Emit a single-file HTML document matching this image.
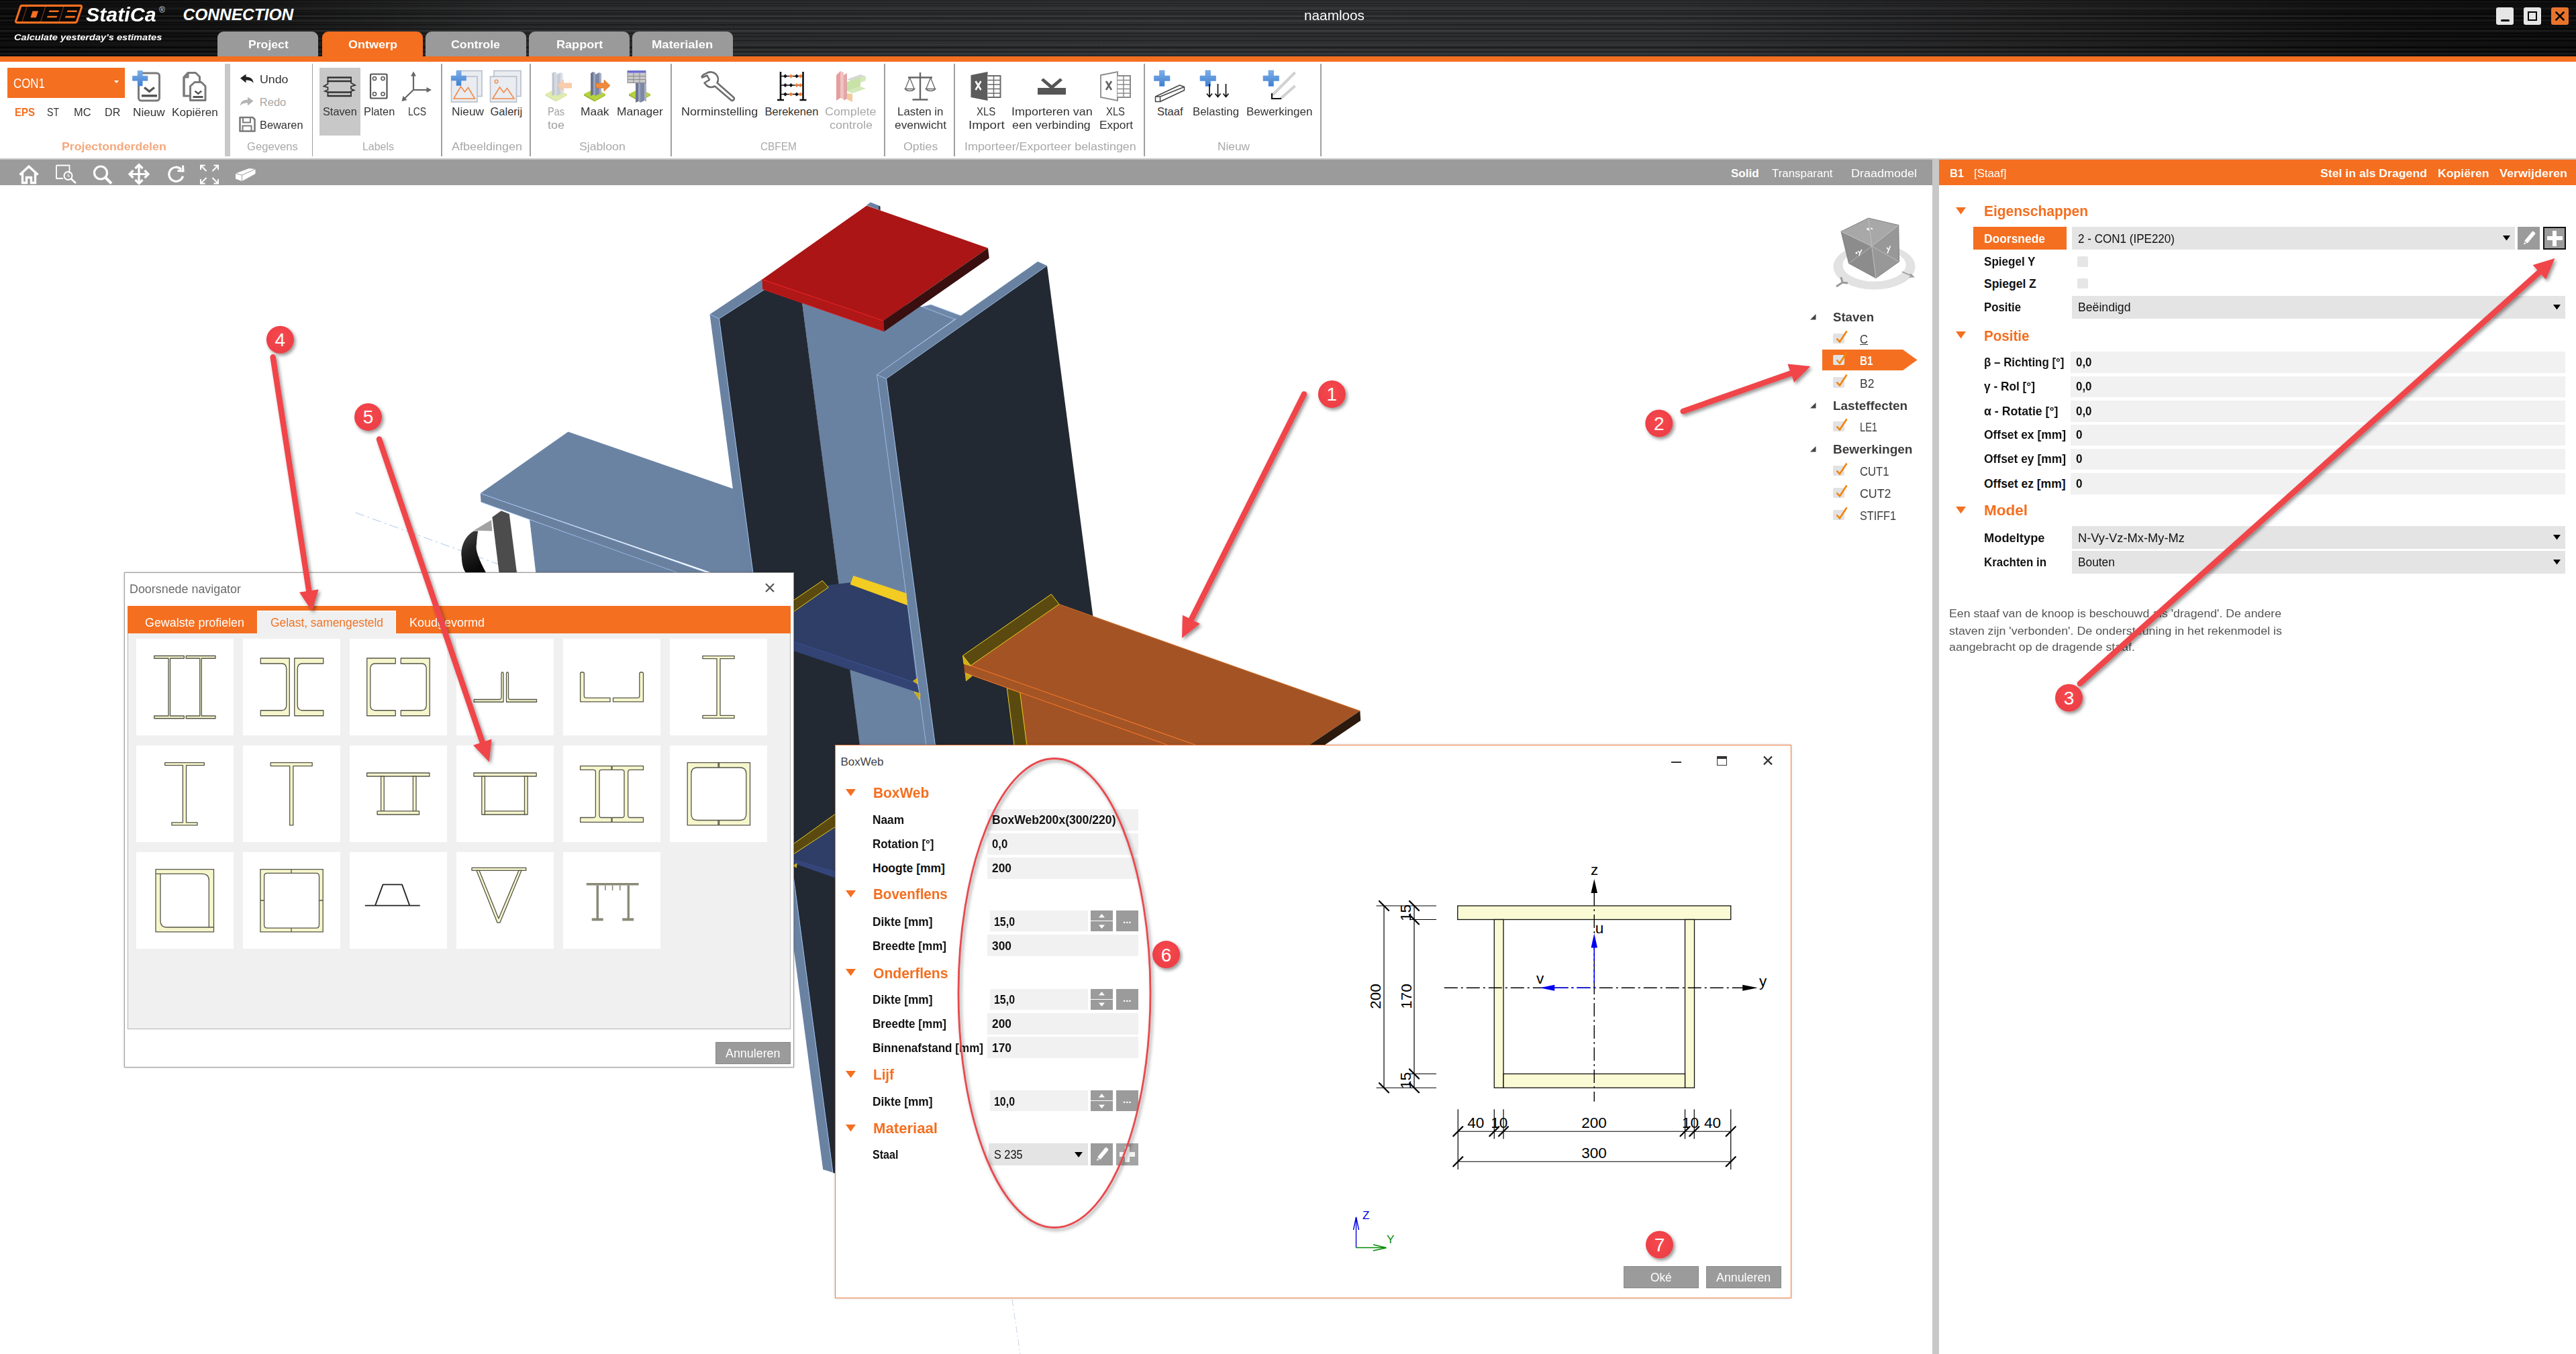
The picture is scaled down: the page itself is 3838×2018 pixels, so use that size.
<!DOCTYPE html>
<html><head><meta charset="utf-8"><title>IDEA StatiCa Connection</title><style>html,body{margin:0;padding:0;background:#fff;}
body{width:3838px;height:2018px;position:relative;overflow:hidden;font-family:"Liberation Sans",sans-serif;}
.t{position:absolute;white-space:nowrap;line-height:1;transform-origin:0 50%;}
.r{position:absolute;display:block;}
svg{overflow:visible}
</style></head><body>
<div class="r" style="left:0;top:0;width:3838px;height:84px;background:repeating-linear-gradient(to bottom,rgba(0,0,0,0) 0px,rgba(0,0,0,0.24) 1.5px,rgba(255,255,255,0.04) 3px,rgba(0,0,0,0) 4.5px,rgba(0,0,0,0.16) 6px,rgba(0,0,0,0) 7px),repeating-linear-gradient(to bottom,rgba(255,255,255,0) 0px,rgba(255,255,255,0.055) 2px,rgba(0,0,0,0.14) 5px,rgba(255,255,255,0.03) 8px,rgba(255,255,255,0) 11px),repeating-linear-gradient(to bottom,rgba(0,0,0,0) 0px,rgba(0,0,0,0.2) 3px,rgba(255,255,255,0.04) 6.5px,rgba(0,0,0,0.12) 9px,rgba(255,255,255,0.05) 13px,rgba(0,0,0,0) 17px),linear-gradient(to right,#030303 0%,#0a0a0a 8%,#232425 20%,#2b2c2e 45%,#292a2c 65%,#161617 82%,#080808 92%,#030303 100%);"></div>
<div class="r" style="left:0.0px;top:84.0px;width:3838.0px;height:8.0px;background:#f46f20;"></div>
<div class="r" style="left:324.0px;top:47.0px;width:150.0px;height:37.0px;background:#9a9a9a;border-radius:9px 9px 0 0;"></div>
<span class="t" style="left:369.5px;top:58.0px;font-size:16.5px;color:#fff;font-weight:bold;transform:scaleX(1.0681);">Project</span>
<div class="r" style="left:480.0px;top:47.0px;width:150.0px;height:38.0px;background:#f46f20;border-radius:9px 9px 0 0;"></div>
<span class="t" style="left:518.8px;top:58.0px;font-size:16.5px;color:#fff;font-weight:bold;transform:scaleX(1.0909);">Ontwerp</span>
<div class="r" style="left:634.0px;top:47.0px;width:150.0px;height:37.0px;background:#9a9a9a;border-radius:9px 9px 0 0;"></div>
<span class="t" style="left:672.0px;top:58.0px;font-size:16.5px;color:#fff;font-weight:bold;transform:scaleX(1.0762);">Controle</span>
<div class="r" style="left:788.0px;top:47.0px;width:150.0px;height:37.0px;background:#9a9a9a;border-radius:9px 9px 0 0;"></div>
<span class="t" style="left:828.8px;top:58.0px;font-size:16.5px;color:#fff;font-weight:bold;transform:scaleX(1.0949);">Rapport</span>
<div class="r" style="left:942.0px;top:47.0px;width:150.0px;height:37.0px;background:#9a9a9a;border-radius:9px 9px 0 0;"></div>
<span class="t" style="left:971.2px;top:58.0px;font-size:16.5px;color:#fff;font-weight:bold;transform:scaleX(1.1180);">Materialen</span>
<span class="t" style="left:1943.0px;top:12.0px;font-size:21px;color:#fff;transform:scaleX(0.9884);">naamloos</span>
<div class="r" style="left:3719.0px;top:11.0px;width:26.0px;height:26.0px;background:#e6e6e6;border-radius:3px;"></div>
<div class="r" style="left:3760.0px;top:11.0px;width:26.0px;height:26.0px;background:#e6e6e6;border-radius:3px;"></div>
<div class="r" style="left:3801.0px;top:11.0px;width:26.0px;height:26.0px;background:#e8742c;border-radius:3px;"></div>
<div class="r" style="left:3725.5px;top:28.5px;width:13.0px;height:3.0px;background:#000;border-radius:1.5px;"></div>
<div class="r" style="left:3766px;top:17px;width:14px;height:14px;box-sizing:border-box;border:2px solid #000;"></div>
<svg class="r" style="left:3801px;top:11px" width="26" height="26"><path d="M7.5 7.5L18.5 18.5M18.5 7.5L7.5 18.5" stroke="#000" stroke-width="2.6" stroke-linecap="round"/></svg>
<svg class="r" style="left:0;top:0" width="130" height="40" viewBox="0 0 130 40"><path d="M32.5 8.4H119.5Q122.3 8.4 121.4 11.2L114.6 31.6Q113.8 33.6 111.5 33.6H25.5Q22.8 33.6 23.7 31L30.4 10.5Q31 8.4 32.5 8.4Z" fill="#070707" stroke="#f46f20" stroke-width="3.1"/><g fill="#f46f20"><path d="M48.6 16.5H57L53.8 26.2H45.4Z"/><path d="M73.5 15.6H88L87.2 18H72.7Z M70.8 23.8H85.3L84.5 26.2H70Z"/><path d="M100.5 15.6H115L114.2 18H99.7Z M97.8 23.8H112.3L111.4 26.6H96.9Z"/><path d="M40.6 10L39.6 10L32.6 32L33.6 32Z M68.2 10L67.2 10L60.2 32L61.2 32Z M95.4 10L94.4 10L87.4 32L88.4 32Z" opacity="0.55"/></g></svg>
<span class="t" style="left:128.0px;top:8.0px;font-size:29px;color:#fff;font-weight:bold;font-style:italic;transform:scaleX(1.0459);">StatiCa</span>
<span class="t" style="left:237.0px;top:9.0px;font-size:12px;color:#ddd;">®</span>
<span class="t" style="left:272.5px;top:10.0px;font-size:24.5px;color:#fff;font-weight:bold;font-style:italic;">CONNECTION</span>
<span class="t" style="left:21.2px;top:49.0px;font-size:13.5px;color:#fff;font-weight:bold;font-style:italic;transform:scaleX(1.0821);">Calculate yesterday's estimates</span>
<div class="r" style="left:0.0px;top:92.0px;width:3838.0px;height:144.0px;background:#fff;"></div>
<div class="r" style="left:0.0px;top:236.0px;width:3838.0px;height:2.0px;background:#c6c6c6;"></div>
<div class="r" style="left:335.0px;top:95.0px;width:7.5px;height:138.0px;background:#c8c8c8;"></div>
<div class="r" style="left:464.8px;top:95.0px;width:1.6px;height:138.0px;background:#a0a0a0;"></div>
<div class="r" style="left:657.2px;top:95.0px;width:1.6px;height:138.0px;background:#a0a0a0;"></div>
<div class="r" style="left:789.2px;top:95.0px;width:1.6px;height:138.0px;background:#a0a0a0;"></div>
<div class="r" style="left:999.2px;top:95.0px;width:1.6px;height:138.0px;background:#a0a0a0;"></div>
<div class="r" style="left:1317.2px;top:95.0px;width:1.6px;height:138.0px;background:#a0a0a0;"></div>
<div class="r" style="left:1421.2px;top:95.0px;width:1.6px;height:138.0px;background:#a0a0a0;"></div>
<div class="r" style="left:1704.2px;top:95.0px;width:1.6px;height:138.0px;background:#a0a0a0;"></div>
<div class="r" style="left:1967.2px;top:95.0px;width:1.6px;height:138.0px;background:#a0a0a0;"></div>
<div class="r" style="left:11.0px;top:101.0px;width:175.0px;height:44.5px;background:#f46f20;"></div>
<span class="t" style="left:20.0px;top:115.0px;font-size:19.5px;color:#fff;transform:scaleX(0.8675);">CON1</span>
<svg class="r" style="left:170px;top:120px" width="8" height="5"><path d="M0 0h7l-3.5 4z" fill="#fff"/></svg>
<span class="t" style="left:21.8px;top:159.0px;font-size:16.5px;color:#f46f20;font-weight:bold;transform:scaleX(0.9086);">EPS</span>
<span class="t" style="left:69.5px;top:159.0px;font-size:16.5px;color:#333;transform:scaleX(0.8537);">ST</span>
<span class="t" style="left:110.0px;top:159.0px;font-size:16.5px;color:#333;transform:scaleX(0.9937);">MC</span>
<span class="t" style="left:155.5px;top:159.0px;font-size:16.5px;color:#333;transform:scaleX(0.9756);">DR</span>
<span class="t" style="left:198.0px;top:159.0px;font-size:16.5px;color:#333;transform:scaleX(1.0414);">Nieuw</span>
<span class="t" style="left:255.8px;top:159.0px;font-size:16.5px;color:#333;transform:scaleX(1.0409);">Kopiëren</span>
<div class="r" style="left:476.0px;top:101.0px;width:61.0px;height:101.0px;background:#c8c8c8;"></div>
<span class="t" style="left:480.5px;top:158.0px;font-size:16.5px;color:#333;transform:scaleX(0.9879);">Staven</span>
<span class="t" style="left:542.0px;top:158.0px;font-size:16.5px;color:#333;transform:scaleX(0.9885);">Platen</span>
<span class="t" style="left:608.0px;top:158.0px;font-size:16.5px;color:#333;transform:scaleX(0.8411);">LCS</span>
<span class="t" style="left:672.5px;top:158.0px;font-size:16.5px;color:#333;transform:scaleX(1.0468);">Nieuw</span>
<span class="t" style="left:730.5px;top:158.0px;font-size:16.5px;color:#333;">Galerij</span>
<span class="t" style="left:815.5px;top:158.0px;font-size:16.5px;color:#a0a0a0;transform:scaleX(0.8793);">Pas</span>
<span class="t" style="left:864.5px;top:158.0px;font-size:16.5px;color:#333;transform:scaleX(1.0533);">Maak</span>
<span class="t" style="left:918.8px;top:158.0px;font-size:16.5px;color:#333;transform:scaleX(1.0557);">Manager</span>
<span class="t" style="left:1014.5px;top:158.0px;font-size:16.5px;color:#333;transform:scaleX(1.0929);">Norminstelling</span>
<span class="t" style="left:1139.5px;top:158.0px;font-size:16.5px;color:#333;">Berekenen</span>
<span class="t" style="left:1229.2px;top:158.0px;font-size:16.5px;color:#a8a8a8;transform:scaleX(1.0833);">Complete</span>
<span class="t" style="left:1337.0px;top:158.0px;font-size:16.5px;color:#333;transform:scaleX(1.0229);">Lasten in</span>
<span class="t" style="left:1455.0px;top:158.0px;font-size:16.5px;color:#333;transform:scaleX(0.9058);">XLS</span>
<span class="t" style="left:1506.8px;top:158.0px;font-size:16.5px;color:#333;transform:scaleX(1.0881);">Importeren van</span>
<span class="t" style="left:1648.2px;top:158.0px;font-size:16.5px;color:#333;transform:scaleX(0.8978);">XLS</span>
<span class="t" style="left:1724.0px;top:158.0px;font-size:16.5px;color:#333;">Staaf</span>
<span class="t" style="left:1777.0px;top:158.0px;font-size:16.5px;color:#333;transform:scaleX(1.0165);">Belasting</span>
<span class="t" style="left:1857.0px;top:158.0px;font-size:16.5px;color:#333;transform:scaleX(1.0326);">Bewerkingen</span>
<span class="t" style="left:815.5px;top:178.0px;font-size:16.5px;color:#a0a0a0;transform:scaleX(1.0899);">toe</span>
<span class="t" style="left:1235.5px;top:178.0px;font-size:16.5px;color:#a8a8a8;transform:scaleX(1.0902);">controle</span>
<span class="t" style="left:1332.5px;top:178.0px;font-size:16.5px;color:#333;transform:scaleX(1.0494);">evenwicht</span>
<span class="t" style="left:1442.5px;top:178.0px;font-size:16.5px;color:#333;transform:scaleX(1.1494);">Import</span>
<span class="t" style="left:1508.2px;top:178.0px;font-size:16.5px;color:#333;transform:scaleX(1.0785);">een verbinding</span>
<span class="t" style="left:1637.5px;top:178.0px;font-size:16.5px;color:#333;transform:scaleX(1.0485);">Export</span>
<span class="t" style="left:386.8px;top:110.0px;font-size:16.5px;color:#333;transform:scaleX(1.0774);">Undo</span>
<span class="t" style="left:386.8px;top:144.0px;font-size:16.5px;color:#a8a8a8;">Redo</span>
<span class="t" style="left:386.8px;top:178.0px;font-size:16.5px;color:#333;transform:scaleX(0.9904);">Bewaren</span>
<span class="t" style="left:91.8px;top:210.0px;font-size:16.5px;color:#f5a87c;font-weight:bold;transform:scaleX(1.0751);">Projectonderdelen</span>
<span class="t" style="left:367.5px;top:210.0px;font-size:16.5px;color:#a9a9a9;transform:scaleX(1.0071);">Gegevens</span>
<span class="t" style="left:540.0px;top:210.0px;font-size:16.5px;color:#a9a9a9;transform:scaleX(0.9666);">Labels</span>
<span class="t" style="left:672.5px;top:210.0px;font-size:16.5px;color:#a9a9a9;transform:scaleX(1.0899);">Afbeeldingen</span>
<span class="t" style="left:862.5px;top:210.0px;font-size:16.5px;color:#a9a9a9;transform:scaleX(1.0705);">Sjabloon</span>
<span class="t" style="left:1133.2px;top:210.0px;font-size:16.5px;color:#a9a9a9;transform:scaleX(0.9307);">CBFEM</span>
<span class="t" style="left:1346.2px;top:210.0px;font-size:16.5px;color:#a9a9a9;transform:scaleX(1.0747);">Opties</span>
<span class="t" style="left:1436.8px;top:210.0px;font-size:16.5px;color:#a9a9a9;transform:scaleX(1.0850);">Importeer/Exporteer belastingen</span>
<span class="t" style="left:1813.5px;top:210.0px;font-size:16.5px;color:#a9a9a9;transform:scaleX(1.0468);">Nieuw</span>
<div class="r" style="left:0.0px;top:238.0px;width:2879.0px;height:37.5px;background:#9b9b9b;"></div>
<div class="r" style="left:2879.0px;top:236.0px;width:9.5px;height:1782.0px;background:#c8c8c8;"></div>
<span class="t" style="left:2579.0px;top:250.0px;font-size:17px;color:#fff;font-weight:bold;">Solid</span>
<span class="t" style="left:2639.5px;top:250.0px;font-size:17px;color:#fff;transform:scaleX(0.9942);">Transparant</span>
<span class="t" style="left:2757.5px;top:250.0px;font-size:17px;color:#fff;transform:scaleX(1.0582);">Draadmodel</span>
<svg class="r" style="left:0;top:237px" width="400" height="39" viewBox="0 237 400 39"><g fill="none" stroke="#fff" stroke-width="3" stroke-linejoin="miter">
<path d="M29.5 260.5L43 248l13.5 12.5M33.5 258v14.5h6v-8h7v8h6V258" stroke-width="3.400"/>
<path d="M84 246.5h19.5v12M84 246.5v19.5h10" stroke-width="1.8"/><circle cx="101.5" cy="262" r="6" stroke-width="2"/><path d="M106 266.5l7 6.5" stroke-width="2.6"/><path d="M101.5 259.5v3h2.5" stroke-width="1.2"/>
<circle cx="150" cy="257.5" r="9.5" stroke-width="3.2"/><path d="M157 264.5l9 9" stroke-width="4"/>
<path d="M207 248v23M195.5 259.5h23" stroke-width="3.2"/><path d="M201.5 251l5.5-5.5 5.5 5.5M201.5 268l5.5 5.5 5.5-5.5M198.5 254l-5.5 5.5 5.5 5.5M215.5 254l5.5 5.5-5.5 5.5" stroke-width="3.2"/>
<path d="M270 252.5a10.5 10.5 0 1 0 2.5 10" stroke-width="3.2"/><path d="M264.5 254.5l8.5 .5-.5-8.5" stroke-width="3"/>
<path d="M299 253v-6.5h6.5M299.5 247l8 8M325 253v-6.5h-6.5M324.5 247l-8 8M299 267v6.5h6.5M299.5 273l8-8M325 267v6.5h-6.5M324.5 273l-8-8" stroke-width="2"/>
</g><path d="M351 258.5l20-7.5 9.5 1v7l-20 11-9.5-3.5z" fill="#fff"/><path d="M351 258.5l9.5 2.5v9M360.5 261l20-9" fill="none" stroke="#9b9b9b" stroke-width="1"/></svg>
<svg class="r" style="left:0;top:92px" width="2000" height="144" viewBox="0 92 2000 144">
<defs><linearGradient id="bp" x1="0" y1="0" x2="0" y2="1"><stop offset="0" stop-color="#7fb0e8"/><stop offset="1" stop-color="#3f7fd0"/></linearGradient></defs>
<rect x="206.5" y="109" width="31" height="41" rx="4" fill="#fff" stroke="#7a7a7a" stroke-width="3"/>
<path d="M211 141h23v3.5h-23z M214 131.5l2.2-2.2 6.3 5 6.3-5 2.2 2.2-8.5 7z" fill="#555"/>
<path d="M205.25 105.5h7v7.75h7.75v7h-7.75v7.75h-7v-7.75h-7.75v-7h7.75z" fill="url(#bp)" stroke="#5a94dc" stroke-width="0.6"/>
<path d="M280 108.5h11.5l6 6v28.5h-6" fill="none" stroke="#7a7a7a" stroke-width="3" stroke-linejoin="round"/><path d="M274 143v-28l6-6.5v6.5h-6" fill="none" stroke="#7a7a7a" stroke-width="3" stroke-linejoin="round"/><path d="M274 115v28h9" fill="none" stroke="#7a7a7a" stroke-width="3"/>
<path d="M290 122.5h10l6 6v21h-22.5v-21z" fill="#fff" stroke="#7a7a7a" stroke-width="3" stroke-linejoin="round"/>
<path d="M287.5 143h15v3h-15z M289.5 136.5l1.8-1.8 4 3.3 4-3.3 1.8 1.8-5.8 4.8z" fill="#555"/>
<path d="M358 116.5l8.5-6v4c7 0 11 3.5 11 9.5c-2-3.5-5.500-4.5-11-4.5v4z" fill="#222"/>
<path d="M377.5 150.5l-8.5-6v4c-7 0-11 3.5-11 9.5c2-3.5 5.5-4.5 11-4.5v4z" fill="#b4b4b4"/>
<path d="M357.5 175h19l3 3v17.5h-22z" fill="#fff" stroke="#7a7a7a" stroke-width="2.6" stroke-linejoin="round"/><path d="M362 175v7.5h11v-7.5 M361.5 195.5v-8h13v8" fill="none" stroke="#7a7a7a" stroke-width="2"/>
<g stroke="#333" fill="none" stroke-width="2.4"><path d="M487.5 115.5h36.5M487.5 121h36.5M487.5 137.5h36.5M487.5 143h36.5"/><path d="M488.5 115.5v9.5l-6 3.5 6 2v3.5l-4.5 2 4.5 1.5v5.5" stroke-width="1.8"/><path d="M523 115.5v8l6 3.5-6 2v3.5l4.5 2-4.5 1.5v7" stroke-width="1.8"/></g>
<rect x="552" y="110.5" width="24.5" height="36" rx="1.5" fill="none" stroke="#555" stroke-width="2.2"/>
<circle cx="558" cy="117" r="2.6" fill="none" stroke="#555" stroke-width="1.5"/>
<circle cx="570.5" cy="117" r="2.6" fill="none" stroke="#555" stroke-width="1.5"/>
<circle cx="558" cy="140" r="2.6" fill="none" stroke="#555" stroke-width="1.5"/>
<circle cx="570.5" cy="140" r="2.6" fill="none" stroke="#555" stroke-width="1.5"/>
<g stroke="#666" stroke-width="2.2" fill="#666"><path d="M616 134V112" fill="none"/><path d="M616 106.5l4 7h-8z" stroke="none"/><path d="M616 134H636" fill="none"/><path d="M643 134l-7.5 4v-8z" stroke="none"/><path d="M616 134L603 146.5" fill="none"/><path d="M598.5 151l2-8 6 6z" stroke="none"/></g>
<rect x="682.5" y="105.5" width="35.5" height="38" fill="#e9ecf1" stroke="#b7bfca" stroke-width="1.6"/>
<rect x="672.5" y="114" width="38.5" height="38" fill="#e9ecf1" stroke="#b7bfca" stroke-width="1.6"/>
<path d="M676 147l10.5-18 6 8 5-6.5 10 16.5z" fill="none" stroke="#f28a4a" stroke-width="1.6"/>
<path d="M680.0 105.5h7v7.5h7.5v7h-7.5v7.5h-7v-7.5h-7.5v-7h7.5z" fill="url(#bp)" stroke="#5a94dc" stroke-width="0.6"/>
<rect x="736" y="105.5" width="40" height="38" fill="#e9ecf1" stroke="#b7bfca" stroke-width="1.6"/>
<rect x="730.5" y="114" width="39" height="38" fill="#e9ecf1" stroke="#b7bfca" stroke-width="1.6"/>
<path d="M734 147l10.5-17 6 8 5-6.5 10.5 15.5z" fill="none" stroke="#f28a4a" stroke-width="1.6"/><circle cx="739.5" cy="121.5" r="2.4" fill="none" stroke="#f28a4a" stroke-width="1.4"/>
<g opacity="0.42"><path d="M812.5 140l16-8 16 8-16 9z" fill="#b5d33a"/><path d="M812.5 140l16 9v2.5l-16-9z" fill="#9ab82c"/><path d="M844.5 140l-16 9v2.5l16-9z" fill="#a6c430"/><path d="M822.5 109l4-2v34l-4 2z" fill="#6c7690"/><path d="M826.5 107l3 1.5v34l-3-1.5z" fill="#9aa4bc"/><path d="M829.5 111l6-3v32l-6 3z" fill="#7d88a4"/><path d="M835.5 108l3 1.5v32l-3-1.5z" fill="#a8b0c6"/><path d="M851.5 124h-12v-5l-9 8.5 9 8.5v-5h12z" fill="#f08a3c" stroke="#e07020" stroke-width="0.8"/></g>
<g opacity="1"><path d="M870 140l16-8 16 8-16 9z" fill="#b5d33a"/><path d="M870 140l16 9v2.5l-16-9z" fill="#9ab82c"/><path d="M902 140l-16 9v2.5l16-9z" fill="#a6c430"/><path d="M880 109l4-2v34l-4 2z" fill="#6c7690"/><path d="M884 107l3 1.5v34l-3-1.5z" fill="#9aa4bc"/><path d="M887 111l6-3v32l-6 3z" fill="#7d88a4"/><path d="M893 108l3 1.5v32l-3-1.5z" fill="#a8b0c6"/><path d="M888 124h12v-5l9 8.5-9 8.5v-5h-12z" fill="#f08a3c" stroke="#e07020" stroke-width="0.8"/></g>
<g opacity="1"><path d="M937 140l16-8 16 8-16 9z" fill="#b5d33a"/><path d="M937 140l16 9v2.5l-16-9z" fill="#9ab82c"/><path d="M969 140l-16 9v2.5l16-9z" fill="#a6c430"/><path d="M947 119l4-2v34l-4 2z" fill="#6c7690"/><path d="M951 117l3 1.5v34l-3-1.5z" fill="#9aa4bc"/><path d="M954 121l6-3v32l-6 3z" fill="#7d88a4"/><path d="M960 118l3 1.5v32l-3-1.5z" fill="#a8b0c6"/><rect x="935" y="105.5" width="27" height="18" fill="#c9c9c9" stroke="#8a8a8a" stroke-width="1"/><rect x="935" y="105.5" width="27" height="3" fill="#6a6adc"/><path d="M935 113.5h27M935 118.5h27M944 108.5v15M953 108.5v15" stroke="#8a8a8a" stroke-width="1" fill="none"/></g>
<path d="M1052 109.5c5-3.5 12-2.5 15.5 2 3 4 3 8.5 1 12l24.5 21.5c2 2 0 6-3.5 4.5l-24.5-21c-4 2-9 2-12.5-1.5l-3-3.5 7.5-4.5-3.5-6.5-7.5 3c-.5-2 1.5-4.5 6-6z" fill="none" stroke="#6e6e6e" stroke-width="2.6" stroke-linejoin="round" transform="translate(0 0)"/>
<g stroke="#111" stroke-width="2.6" fill="none"><path d="M1163 107v42M1196.5 107v42M1158 149h10M1191.5 149h10"/><path d="M1163 113.5h33.5M1163 127h33.5M1163 140.5h33.5" stroke-width="1.4"/></g>
<path d="M1170 110.5l3 3-3 3-3-3z" fill="#111"/>
<path d="M1178.5 110.5l3 3-3 3-3-3z" fill="#f07a30"/>
<path d="M1187 110.5l3 3-3 3-3-3z" fill="#111"/>
<path d="M1192.5 110.5l3 3-3 3-3-3z" fill="#f07a30"/>
<path d="M1170 124l3 3-3 3-3-3z" fill="#111"/>
<path d="M1178.5 124l3 3-3 3-3-3z" fill="#111"/>
<path d="M1187 124l3 3-3 3-3-3z" fill="#f07a30"/>
<path d="M1192.5 124l3 3-3 3-3-3z" fill="#f07a30"/>
<path d="M1170 137.5l3 3-3 3-3-3z" fill="#111"/>
<path d="M1178.5 137.5l3 3-3 3-3-3z" fill="#f07a30"/>
<path d="M1187 137.5l3 3-3 3-3-3z" fill="#111"/>
<path d="M1192.5 137.5l3 3-3 3-3-3z" fill="#f07a30"/>
<g opacity="0.55"><path d="M1246 112l6-6v40l-6 4z" fill="#d05050"/><path d="M1252 106l5 2v40l-5-2z" fill="#e89090"/><path d="M1257 112l5-3v38l-5 3z" fill="#c86060"/><path d="M1262 118l20-7 8 3-20 8z" fill="#b8b8b8"/><path d="M1262 122l20-7v14l-20 7z" fill="#9ccc60"/><path d="M1282 115l8-1v6l-8 3z M1262 136l20-7 8 3-20 7z" fill="#b0d880"/><path d="M1262 139l8 1v12l-8-4z" fill="#e8a050"/></g>
<g stroke="#666" fill="none" stroke-width="2.4"><path d="M1371 108v40M1359.5 148.5h23M1353 115.5h36"/><path d="M1355.5 116l-6.5 16M1355.5 116l6.5 16M1386.5 116l-6.5 16M1386.5 116l6.5 16" stroke-width="1.3"/><path d="M1348.5 132.5c3 4 11 4 14 0zM1379.5 132.5c3 4 11 4 14 0z" fill="#fff" stroke-width="1.6"/></g>
<path d="M1446.5 112l25-5v43l-25-5z" fill="#5c5c5c"/><path d="M1471.5 113h19v32h-19" fill="#fff" stroke="#6a6a6a" stroke-width="2"/><path d="M1471.5 119.5h19M1471.5 126h19M1471.5 132.5h19M1471.5 139h19M1480.5 113v32" stroke="#6a6a6a" stroke-width="1.5" fill="none"/><path d="M1453.5 121l8 13M1461.5 121l-8 13" stroke="#fff" stroke-width="2.6"/>
<path d="M1546 131h42v10h-42z M1551 119.5l3.5-3 12.5 10.5 12.5-10.5 3.5 3-16 14z" fill="#555"/>
<path d="M1640 112l25-5v43l-25-5z" fill="#fff" stroke="#8a8a8a" stroke-width="1.8"/><path d="M1665 113h19v32h-19" fill="#fff" stroke="#8a8a8a" stroke-width="2"/><path d="M1665 119.5h19M1665 126h19M1665 132.5h19M1665 139h19M1674 113v32" stroke="#8a8a8a" stroke-width="1.5" fill="none"/><path d="M1648 121l8 13M1656 121l-8 13" stroke="#666" stroke-width="2.6"/>
<path d="M1727.5 105h7.5v8.0h8.0v7.5h-8.0v8.0h-7.5v-8.0h-8.0v-7.5h8.0z" fill="url(#bp)" stroke="#5a94dc" stroke-width="0.6"/>
<path d="M1721.5 144l36-17 7 2.5v5l-36 17h-7z M1721.5 144h7l36-14.5M1728.5 144v7.5" fill="#fff" stroke="#444" stroke-width="1.5" stroke-linejoin="round"/>
<path d="M1796.0 105h7.5v8.0h8.0v7.5h-8.0v8.0h-7.5v-8.0h-8.0v-7.5h8.0z" fill="url(#bp)" stroke="#5a94dc" stroke-width="0.6"/>
<path d="M1802 125v19M1798 139.5l4 5 4-5" fill="none" stroke="#111" stroke-width="1.7"/>
<path d="M1814.5 125v19M1810.5 139.5l4 5 4-5" fill="none" stroke="#111" stroke-width="1.7"/>
<path d="M1826.5 125v19M1822.5 139.5l4 5 4-5" fill="none" stroke="#111" stroke-width="1.7"/>
<path d="M1896 141.5L1929.5 108M1908 147L1929.5 128" stroke="#b8b8b8" stroke-width="3.5" fill="none"/><path d="M1896 141.5L1929.5 108M1908 147L1929.5 128" stroke="#e4e4e4" stroke-width="1.5" fill="none"/><path d="M1895 139v8h14" fill="none" stroke="#111" stroke-width="2.2"/>
<path d="M1890.0 105h7.5v8.0h8.0v7.5h-8.0v8.0h-7.5v-8.0h-8.0v-7.5h8.0z" fill="url(#bp)" stroke="#5a94dc" stroke-width="0.6"/>
</svg>
<div class="r" style="left:2888.5px;top:238.0px;width:949.5px;height:37.5px;background:#f46f20;"></div>
<span class="t" style="left:2904.5px;top:250.0px;font-size:17px;color:#fff;font-weight:bold;transform:scaleX(0.9663);">B1</span>
<span class="t" style="left:2941.0px;top:250.0px;font-size:17px;color:#fff;transform:scaleX(0.9870);">[Staaf]</span>
<span class="t" style="left:3457.0px;top:250.0px;font-size:17px;color:#fff;font-weight:bold;transform:scaleX(1.0389);">Stel in als Dragend</span>
<span class="t" style="left:3631.5px;top:250.0px;font-size:17px;color:#fff;font-weight:bold;transform:scaleX(1.0383);">Kopiëren</span>
<span class="t" style="left:3723.5px;top:250.0px;font-size:17px;color:#fff;font-weight:bold;transform:scaleX(1.0583);">Verwijderen</span>
<svg class="r" style="left:2914px;top:309.0px" width="15" height="10.5"><path d="M0 0H15L7.5 10.5z" fill="#f46f20"/></svg>
<span class="t" style="left:2956.0px;top:305.0px;font-size:21.5px;color:#f46f20;font-weight:bold;transform:scaleX(0.9754);">Eigenschappen</span>
<svg class="r" style="left:2914px;top:494.0px" width="15" height="10.5"><path d="M0 0H15L7.5 10.5z" fill="#f46f20"/></svg>
<span class="t" style="left:2956.0px;top:491.0px;font-size:21.5px;color:#f46f20;font-weight:bold;transform:scaleX(0.9575);">Positie</span>
<svg class="r" style="left:2914px;top:754.5px" width="15" height="10.5"><path d="M0 0H15L7.5 10.5z" fill="#f46f20"/></svg>
<span class="t" style="left:2956.0px;top:751.0px;font-size:21.5px;color:#f46f20;font-weight:bold;transform:scaleX(1.0466);">Model</span>
<div class="r" style="left:2940.0px;top:338.0px;width:139.0px;height:34.0px;background:#f46f20;"></div>
<span class="t" style="left:2956.0px;top:348.0px;font-size:17.5px;color:#fff;font-weight:bold;transform:scaleX(0.9955);">Doorsnede</span>
<div class="r" style="left:3087.0px;top:338.0px;width:659.5px;height:34.0px;background:#e4e4e4;"></div>
<span class="t" style="left:3096.0px;top:348.0px;font-size:17.5px;color:#111;transform:scaleX(0.9741);">2 - CON1 (IPE220)</span>
<svg class="r" style="left:3729px;top:351px" width="11" height="8"><path d="M0 0H11L5.5 7.5z" fill="#000"/></svg>
<div class="r" style="left:3751.0px;top:338.0px;width:33.0px;height:34.0px;background:#9b9b9b;"></div>
<svg class="r" style="left:3751px;top:338px" width="33" height="34"><path d="M9 26.5l1.8-6.2L21.5 7.2a1.6 1.6 0 0 1 2.3-.2l2 1.7a1.6 1.6 0 0 1 .2 2.3L15.2 24z" fill="#fff"/><path d="M10 22l3.6 3" stroke="#9b9b9b" stroke-width="1.4"/></svg>
<div class="r" style="left:3789px;top:338px;width:34px;height:34px;box-sizing:border-box;border:2px solid #111;background:#9b9b9b"></div>
<div class="r" style="left:3794.5px;top:352.0px;width:23.0px;height:6.0px;background:#fff;"></div>
<div class="r" style="left:3803.0px;top:343.5px;width:6.0px;height:23.0px;background:#fff;"></div>
<span class="t" style="left:2956.0px;top:382.0px;font-size:17.5px;color:#111;font-weight:bold;transform:scaleX(0.9750);">Spiegel Y</span>
<span class="t" style="left:2956.0px;top:415.0px;font-size:17.5px;color:#111;font-weight:bold;">Spiegel Z</span>
<span class="t" style="left:2956.0px;top:450.0px;font-size:17.5px;color:#111;font-weight:bold;transform:scaleX(0.9585);">Positie</span>
<div class="r" style="left:3095.0px;top:382.0px;width:16.0px;height:15.5px;background:#e6e6e6;border-radius:2.5px;"></div>
<div class="r" style="left:3095.0px;top:414.5px;width:16.0px;height:15.5px;background:#e6e6e6;border-radius:2.5px;"></div>
<div class="r" style="left:3087.0px;top:441.0px;width:735.0px;height:33.5px;background:#e4e4e4;"></div>
<span class="t" style="left:3096.0px;top:450.0px;font-size:17.5px;color:#111;transform:scaleX(1.0084);">Beëindigd</span>
<svg class="r" style="left:3804px;top:453.5px" width="11" height="8"><path d="M0 0H11L5.5 7.5z" fill="#000"/></svg>
<div class="r" style="left:3085.0px;top:524.0px;width:737.0px;height:31.5px;background:#f1f1f1;"></div>
<span class="t" style="left:2956.0px;top:532.0px;font-size:17.5px;color:#111;font-weight:bold;transform:scaleX(0.9664);">β – Richting [°]</span>
<span class="t" style="left:3092.5px;top:532.0px;font-size:17.5px;color:#111;font-weight:bold;transform:scaleX(0.9660);">0,0</span>
<div class="r" style="left:3085.0px;top:560.5px;width:737.0px;height:31.5px;background:#f1f1f1;"></div>
<span class="t" style="left:2956.0px;top:568.0px;font-size:17.5px;color:#111;font-weight:bold;transform:scaleX(0.9871);">γ - Rol [°]</span>
<span class="t" style="left:3092.5px;top:568.0px;font-size:17.5px;color:#111;font-weight:bold;transform:scaleX(0.9660);">0,0</span>
<div class="r" style="left:3085.0px;top:597.0px;width:737.0px;height:31.5px;background:#f1f1f1;"></div>
<span class="t" style="left:2956.0px;top:605.0px;font-size:17.5px;color:#111;font-weight:bold;transform:scaleX(1.0125);">α - Rotatie [°]</span>
<span class="t" style="left:3092.5px;top:605.0px;font-size:17.5px;color:#111;font-weight:bold;transform:scaleX(0.9660);">0,0</span>
<div class="r" style="left:3085.0px;top:632.5px;width:737.0px;height:31.5px;background:#f1f1f1;"></div>
<span class="t" style="left:2956.0px;top:640.0px;font-size:17.5px;color:#111;font-weight:bold;transform:scaleX(0.9957);">Offset ex [mm]</span>
<span class="t" style="left:3092.5px;top:640.0px;font-size:17.5px;color:#111;font-weight:bold;transform:scaleX(0.9761);">0</span>
<div class="r" style="left:3085.0px;top:668.5px;width:737.0px;height:31.5px;background:#f1f1f1;"></div>
<span class="t" style="left:2956.0px;top:676.0px;font-size:17.5px;color:#111;font-weight:bold;transform:scaleX(0.9957);">Offset ey [mm]</span>
<span class="t" style="left:3092.5px;top:676.0px;font-size:17.5px;color:#111;font-weight:bold;transform:scaleX(0.9761);">0</span>
<div class="r" style="left:3085.0px;top:705.0px;width:737.0px;height:31.5px;background:#f1f1f1;"></div>
<span class="t" style="left:2956.0px;top:713.0px;font-size:17.5px;color:#111;font-weight:bold;">Offset ez [mm]</span>
<span class="t" style="left:3092.5px;top:713.0px;font-size:17.5px;color:#111;font-weight:bold;transform:scaleX(0.9761);">0</span>
<div class="r" style="left:3087.0px;top:784.0px;width:735.0px;height:33.5px;background:#e4e4e4;"></div>
<span class="t" style="left:2956.0px;top:794.0px;font-size:17.5px;color:#111;font-weight:bold;transform:scaleX(1.0458);">Modeltype</span>
<span class="t" style="left:3096.0px;top:794.0px;font-size:17.5px;color:#111;transform:scaleX(1.0463);">N-Vy-Vz-Mx-My-Mz</span>
<svg class="r" style="left:3804px;top:797.0px" width="11" height="8"><path d="M0 0H11L5.5 7.5z" fill="#000"/></svg>
<div class="r" style="left:3087.0px;top:821.0px;width:735.0px;height:33.5px;background:#e4e4e4;"></div>
<span class="t" style="left:2956.0px;top:830.0px;font-size:17.5px;color:#111;font-weight:bold;transform:scaleX(0.9660);">Krachten in</span>
<span class="t" style="left:3096.0px;top:830.0px;font-size:17.5px;color:#111;transform:scaleX(0.9871);">Bouten</span>
<svg class="r" style="left:3804px;top:834.0px" width="11" height="8"><path d="M0 0H11L5.5 7.5z" fill="#000"/></svg>
<span class="t" style="left:2904.0px;top:906.0px;font-size:17px;color:#555;transform:scaleX(1.0415);">Een staaf van de knoop is beschouwd als 'dragend'. De andere</span>
<span class="t" style="left:2904.0px;top:932.0px;font-size:17px;color:#555;transform:scaleX(1.0500);">staven zijn 'verbonden'. De ondersteuning in het rekenmodel is</span>
<span class="t" style="left:2904.0px;top:956.0px;font-size:17px;color:#555;transform:scaleX(1.0466);">aangebracht op de dragende staaf.</span>
<svg class="r" style="left:2700px;top:300px" width="180" height="150" viewBox="2700 300 180 150">
<path fill-rule="evenodd" fill="#e2e2e2" d="M2731.5 397.5a61 34 0 1 0 122 0a61 34 0 1 0-122 0z M2745.5 395a47 24.5 0 1 0 94 0a47 24.5 0 1 0-94 0z"/>
<path d="M2783.75 325L2828.75 335.5L2788.75 367L2743 345Z" fill="#a8a8a8"/>
<path d="M2743 345L2788.75 367L2795 414.5L2754.5 392.5Z" fill="#8c8c8c"/>
<path d="M2788.75 367L2828.75 335.5L2829.5 390L2795 414.5Z" fill="#989898"/>
<path d="M2783.75 325L2788.75 367L2795 414.5M2743 345L2788.75 367L2828.75 335.5M2754.5 392.5L2788.75 367L2829.5 390" fill="none" stroke="#c4c4c4" stroke-width="0.8"/>
<path d="M2783.75 325L2828.75 335.5L2829.5 390L2795 414.5L2754.5 392.5L2743 345Z" fill="none" stroke="#6e6e6e" stroke-width="0.8"/>
<g stroke="#fff" stroke-width="1.6" fill="none"><path d="M2768 374l3 3 3-5M2771 377l-1 4M2764.5 377h3M2766 375.5v3"/><path d="M2811 369l3 3.5 2.5-6M2814 372.5l-2 5"/><path d="M2781 341l4 1.5M2783 339.5l1 4M2787 340l3 1.5"/></g>
<path d="M2736 427l9-6 8 1M2745 421l-2-8" stroke="#9a9a9a" stroke-width="3" fill="none"/>
<path d="M2834 405l16 7M2846 408l5 4.5-6.5 .5" stroke="#9a9a9a" stroke-width="1.6" fill="none"/>
</svg>
<svg class="r" style="left:2697px;top:467.5px" width="9" height="9"><path d="M8.5 0V8.5H0z" fill="#444"/></svg>
<span class="t" style="left:2731.0px;top:464.0px;font-size:18.5px;color:#3c3c3c;font-weight:bold;transform:scaleX(1.0054);">Staven</span>
<svg class="r" style="left:2697px;top:599.5px" width="9" height="9"><path d="M8.5 0V8.5H0z" fill="#444"/></svg>
<span class="t" style="left:2731.0px;top:596.0px;font-size:18.5px;color:#3c3c3c;font-weight:bold;transform:scaleX(1.0185);">Lasteffecten</span>
<svg class="r" style="left:2697px;top:664.5px" width="9" height="9"><path d="M8.5 0V8.5H0z" fill="#444"/></svg>
<span class="t" style="left:2731.0px;top:661.0px;font-size:18.5px;color:#3c3c3c;font-weight:bold;transform:scaleX(1.0291);">Bewerkingen</span>
<svg class="r" style="left:2715px;top:521px" width="142" height="31"><path d="M0 0H120L141.5 15.5L120 31H0z" fill="#f46f20"/></svg>
<div class="r" style="left:2731.0px;top:496.5px;width:16.5px;height:15.5px;background:#e2e2e2;border-radius:2px;"></div><svg class="r" style="left:2734px;top:490.5px" width="22" height="22"><path d="M2.5 13.5L7 18.5L17.5 2.5" fill="none" stroke="#f5820a" stroke-width="2.6"/></svg>
<span class="t" style="left:2770.5px;top:497.0px;font-size:18.5px;color:#3c3c3c;transform:scaleX(0.8982);text-decoration:underline;">C</span>
<div class="r" style="left:2731.0px;top:528.5px;width:16.5px;height:15.5px;background:#e2e2e2;border-radius:2px;"></div><svg class="r" style="left:2734px;top:522.5px" width="22" height="22"><path d="M2.5 13.5L7 18.5L17.5 2.5" fill="none" stroke="#f5820a" stroke-width="2.6"/></svg>
<span class="t" style="left:2770.5px;top:529.0px;font-size:18.5px;color:#fff;font-weight:bold;transform:scaleX(0.8245);">B1</span>
<div class="r" style="left:2731.0px;top:562.0px;width:16.5px;height:15.5px;background:#e2e2e2;border-radius:2px;"></div><svg class="r" style="left:2734px;top:556.0px" width="22" height="22"><path d="M2.5 13.5L7 18.5L17.5 2.5" fill="none" stroke="#f5820a" stroke-width="2.6"/></svg>
<span class="t" style="left:2770.5px;top:563.0px;font-size:18.5px;color:#3c3c3c;transform:scaleX(0.9501);">B2</span>
<div class="r" style="left:2731.0px;top:627.5px;width:16.5px;height:15.5px;background:#e2e2e2;border-radius:2px;"></div><svg class="r" style="left:2734px;top:621.5px" width="22" height="22"><path d="M2.5 13.5L7 18.5L17.5 2.5" fill="none" stroke="#f5820a" stroke-width="2.6"/></svg>
<span class="t" style="left:2770.5px;top:628.0px;font-size:18.5px;color:#3c3c3c;transform:scaleX(0.7898);">LE1</span>
<div class="r" style="left:2731.0px;top:693.5px;width:16.5px;height:15.5px;background:#e2e2e2;border-radius:2px;"></div><svg class="r" style="left:2734px;top:687.5px" width="22" height="22"><path d="M2.5 13.5L7 18.5L17.5 2.5" fill="none" stroke="#f5820a" stroke-width="2.6"/></svg>
<span class="t" style="left:2770.5px;top:694.0px;font-size:18.5px;color:#3c3c3c;transform:scaleX(0.9004);">CUT1</span>
<div class="r" style="left:2731.0px;top:726.5px;width:16.5px;height:15.5px;background:#e2e2e2;border-radius:2px;"></div><svg class="r" style="left:2734px;top:720.5px" width="22" height="22"><path d="M2.5 13.5L7 18.5L17.5 2.5" fill="none" stroke="#f5820a" stroke-width="2.6"/></svg>
<span class="t" style="left:2770.5px;top:727.0px;font-size:18.5px;color:#3c3c3c;transform:scaleX(0.9625);">CUT2</span>
<div class="r" style="left:2731.0px;top:759.5px;width:16.5px;height:15.5px;background:#e2e2e2;border-radius:2px;"></div><svg class="r" style="left:2734px;top:753.5px" width="22" height="22"><path d="M2.5 13.5L7 18.5L17.5 2.5" fill="none" stroke="#f5820a" stroke-width="2.6"/></svg>
<span class="t" style="left:2770.5px;top:760.0px;font-size:18.5px;color:#3c3c3c;transform:scaleX(0.8756);">STIFF1</span>
<svg class="r" style="left:0;top:0" width="2879" height="2018" viewBox="0 0 2879 2018" shape-rendering="geometricPrecision">
<defs><linearGradient id="mg" x1="0" y1="0" x2="0.4" y2="1"><stop offset="0" stop-color="#4a4a4a"/><stop offset="0.5" stop-color="#222"/><stop offset="1" stop-color="#0a0a0a"/></linearGradient></defs>
<polyline points="529.5,764.0 790.0,858.0" fill="none" stroke="#9ab8e6" stroke-width="0.8" stroke-dasharray="14 5 3 5"/>
<path d="M706 791.4 C690 800 686 820 687.8 830 C688 840 690 848 693.6 853 L723.8 853 C714 835 708 820 709.9 811.6 C710.5 803 711 797 712.3 791.4 Z" fill="url(#mg)"/>
<polygon points="706.0,790.5 732.0,775.1 733.4,791.4" fill="#a2a2a2" />
<polygon points="733.4,770.8 746.8,761.2 758.8,766.0 769.9,853.0 743.5,853.0" fill="#4c4c4c" />
<polygon points="789.1,774.6 1120.0,892.0 1120.0,1000.0 815.3,1000.0" fill="#6a82a2" />
<polygon points="846.5,643.5 1094.0,729.0 1114.0,872.0 715.7,735.3" fill="#6b83a3" />
<polygon points="715.7,735.3 1114.0,875.0 1114.0,891.0 716.6,748.2" fill="#69809f" />
<polyline points="715.7,735.3 1114.0,875.0" fill="none" stroke="#9cc0f0" stroke-width="1" />
<polyline points="716.6,748.2 1114.0,891.0" fill="none" stroke="#9cc0f0" stroke-width="0.8" />
<polygon points="1193.5,440.0 1373.8,457.2 1422.5,476.0 1306.5,558.5 1400.0,1260.0 1300.0,1260.0" fill="#6a82a2" />
<polygon points="1373.8,457.2 1387.0,454.0 1436.2,472.2 1422.5,476.0" fill="#6f88a8" stroke="#9cc0f0" stroke-width="0.8" />
<polygon points="1057.5,468.5 1136.0,416.0 1146.0,427.0 1071.5,475.0" fill="#6a82a2" />
<polygon points="1057.5,468.5 1071.5,475.0 1240.9,1747.4 1226.2,1743.0" fill="#6a82a2" />
<polygon points="1071.5,475.0 1146.0,427.0 1195.0,451.0 1290.0,1180.0 1290.0,1770.0 1240.9,1747.4" fill="#232932" />
<polyline points="1071.5,475.0 1240.9,1747.4" fill="none" stroke="#9cc0f0" stroke-width="1" />
<polyline points="1057.5,468.5 1071.5,475.0 1146.0,427.0" fill="none" stroke="#9cc0f0" stroke-width="0.8" />
<polygon points="1306.5,558.5 1546.2,389.8 1560.0,396.0 1320.5,564.5" fill="#6a82a2" />
<polygon points="1306.5,558.5 1320.5,564.5 1405.3,1200.0 1391.8,1200.0" fill="#6a82a2" />
<polygon points="1320.5,564.5 1560.0,396.0 1665.3,1200.0 1405.3,1200.0" fill="#232932" />
<polyline points="1306.5,558.5 1320.5,564.5 1560.0,396.0" fill="none" stroke="#9cc0f0" stroke-width="0.8" />
<polyline points="1320.5,564.5 1405.3,1200.0" fill="none" stroke="#9cc0f0" stroke-width="1" />
<polyline points="1306.5,558.5 1391.8,1200.0" fill="none" stroke="#9cc0f0" stroke-width="0.8" />
<polyline points="1306.5,558.5 1422.5,476.0" fill="none" stroke="#9cc0f0" stroke-width="0.8" />
<polygon points="1291.0,306.0 1297.0,301.5 1311.0,307.0 1311.5,313.5" fill="#6a82a2" />
<polygon points="1309.0,307.0 1311.5,307.5 1311.5,313.5 1309.5,312.5" fill="#2a3340" />
<polygon points="1291.2,306.5 1472.0,369.8 1316.2,478.0 1135.5,416.5" fill="#ab1515" />
<polygon points="1135.5,416.5 1316.2,478.0 1317.5,494.0 1136.2,431.0" fill="#b01717" />
<polygon points="1316.2,478.0 1472.0,369.8 1473.8,384.8 1317.5,494.0" fill="#3a0f0f" />
<polyline points="1135.5,416.5 1316.2,478.0" fill="none" stroke="#f02020" stroke-width="1" />
<polyline points="1136.2,431.0 1317.5,494.0" fill="none" stroke="#e01c1c" stroke-width="0.8" />
<polygon points="1170.0,923.0 1234.2,872.0 1266.3,868.3 1351.6,902.0 1366.0,1018.3 1170.0,952.0" fill="#2f3e66" />
<polygon points="1170.0,952.0 1366.0,1018.3 1369.3,1032.7 1170.0,966.0" fill="#324374" />
<polyline points="1170.0,952.0 1366.0,1018.3" fill="none" stroke="#3c56a0" stroke-width="0.8" />
<polygon points="1271.4,858.1 1350.5,884.2 1351.6,902.0 1266.7,871.0" fill="#f2cc22" />
<polygon points="1170.0,903.0 1225.3,865.4 1234.2,875.4 1170.0,920.5" fill="#5a4a10" stroke="#e8cc20" stroke-width="1" />
<polygon points="1360.5,1015.0 1366.5,1011.0 1366.5,1019.0" fill="#c8a818" stroke="#f0d020" stroke-width="0.8" />
<polygon points="1362.0,1031.0 1371.0,1034.0 1370.0,1043.0" fill="#c8a818" stroke="#f0d020" stroke-width="0.8" />
<polygon points="1182.0,1273.0 1300.0,1196.0 1300.0,1313.5 1182.0,1279.7" fill="#2f3e66" />
<polygon points="1182.0,1279.7 1300.0,1313.5 1300.0,1328.3 1182.0,1286.4" fill="#34457a" />
<polygon points="1170.0,1266.5 1300.0,1173.4 1300.0,1195.8 1170.0,1281.0" fill="#5a4a10" stroke="#e8cc20" stroke-width="1" />
<polygon points="1182.0,1290.0 1187.0,1287.0 1186.5,1293.0" fill="#c8a818" stroke="#f0d020" stroke-width="0.8" />
<polygon points="1519.7,1032.0 1900.0,1165.0 1900.0,1200.0 1541.4,1200.0" fill="#a15325" />
<polygon points="1500.3,1025.3 1519.7,1032.0 1541.4,1200.0 1522.4,1200.0" fill="#5a4a10" stroke="#f0d020" stroke-width="1" />
<polygon points="1578.0,900.5 2026.4,1059.5 1892.5,1149.5 1446.0,992.1" fill="#a45424" />
<polygon points="1436.0,989.3 1446.0,992.1 1892.5,1149.5 1893.0,1165.0 1437.2,1002.6" fill="#a35525" />
<polygon points="2026.4,1059.5 2027.2,1074.0 1893.0,1165.0 1892.5,1149.5" fill="#2c1a0e" />
<polyline points="1446.0,992.1 1892.5,1149.5" fill="none" stroke="#ff7a28" stroke-width="1" />
<polyline points="1437.2,1002.6 1893.0,1165.0" fill="none" stroke="#ff7a28" stroke-width="1" />
<polyline points="1578.0,900.5 2026.4,1059.5" fill="none" stroke="#e07830" stroke-width="0.8" />
<polygon points="1434.4,977.2 1566.3,885.6 1578.0,900.5 1446.0,992.1" fill="#5a4a10" stroke="#f0d020" stroke-width="1" />
<polygon points="1434.4,977.2 1446.0,992.1 1436.0,989.3" fill="#d0b018" stroke="#f0d020" stroke-width="0.8" />
<polygon points="1438.3,1003.2 1448.2,1007.6 1439.4,1014.8" fill="#c8a818" stroke="#f0d020" stroke-width="0.8" />
<polyline points="1508.0,1937.0 1520.0,2018.0" fill="none" stroke="#b8c8e0" stroke-width="0.8" stroke-dasharray="10 4 2 4"/>
</svg>
<div class="r" style="left:185px;top:853px;width:997.5px;height:737.5px;background:#fff;box-sizing:border-box;border:1px solid #9c9c9c;box-shadow:0 0 3px rgba(0,0,0,0.25)"></div>
<span class="t" style="left:193.0px;top:870.0px;font-size:17.5px;color:#6a6a6a;transform:scaleX(1.0217);">Doorsnede navigator</span>
<svg class="r" style="left:1139.5px;top:869px" width="14" height="14"><path d="M1 1L13 13M13 1L1 13" stroke="#555" stroke-width="2.2"/></svg>
<div class="r" style="left:190.0px;top:903.0px;width:988.0px;height:41.0px;background:#f46f20;"></div>
<div class="r" style="left:383.0px;top:909.5px;width:207.0px;height:35.0px;background:#f0f0f0;box-sizing:border-box;border:1px solid #fff;border-bottom:none;"></div>
<span class="t" style="left:216.0px;top:920.0px;font-size:17.5px;color:#fff;transform:scaleX(1.0211);">Gewalste profielen</span>
<span class="t" style="left:402.5px;top:920.0px;font-size:17.5px;color:#ee7428;transform:scaleX(0.9926);">Gelast, samengesteld</span>
<span class="t" style="left:610.0px;top:920.0px;font-size:17.5px;color:#fff;transform:scaleX(1.0279);">Koudgevormd</span>
<div class="r" style="left:190px;top:944px;width:988px;height:589.5px;background:#f0f0f0;box-sizing:border-box;border:1px solid #b4b4b4;border-top:none"></div>
<div class="r" style="left:1066px;top:1552.5px;width:111.5px;height:33.5px;background:#9b9b9b;box-sizing:border-box;border:1px solid #888"></div>
<span class="t" style="left:1081.0px;top:1562.0px;font-size:17.5px;color:#fff;transform:scaleX(1.0215);">Annuleren</span>
<svg class="r" style="left:203px;top:952px;background:#fff" width="145" height="144" viewBox="0 0 145 144"><g fill="#f6f6cc" stroke="#55554a" stroke-width="1.3" stroke-linejoin="round"><path d="M26.75 25.5H71.25V29.25H50.5V115H71.25V118.75H26.75V115H48V29.25H26.75Z"/><path d="M74.25 25.5H118V29.25H97.25V115H118V118.75H74.25V115H94.75V29.25H74.25Z"/></g></svg>
<svg class="r" style="left:362px;top:952px;background:#fff" width="145" height="144" viewBox="0 0 145 144"><g fill="#f6f6cc" stroke="#55554a" stroke-width="1.3" stroke-linejoin="round"><path d="M26.25 29H69.25V114.75H26.25V106.75H57.75Q64.75 106.75 64.75 98.75V45Q64.75 37 57.75 37H26.25Z"/><path d="M119.75 29H76.75V114.75H119.75V106.75H88.25Q81.25 106.75 81.25 98.75V45Q81.25 37 88.25 37H119.75Z"/></g></svg>
<svg class="r" style="left:521px;top:952px;background:#fff" width="145" height="144" viewBox="0 0 145 144"><g fill="#f6f6cc" stroke="#55554a" stroke-width="1.3" stroke-linejoin="round"><path d="M68.25 29H25.75V114.75H68.25V106.75H37.75Q30.75 106.75 30.75 98.75V45Q30.75 37 37.75 37H68.25Z"/><path d="M76.25 29H119.25V114.75H76.25V106.75H107.25Q114.25 106.75 114.25 98.75V45Q114.25 37 107.25 37H76.25Z"/></g></svg>
<svg class="r" style="left:680px;top:952px;background:#fff" width="145" height="144" viewBox="0 0 145 144"><g fill="#f6f6cc" stroke="#55554a" stroke-width="1.3" stroke-linejoin="round"><path d="M26.25 90.5H64Q67 90.5 67 87V51Q68.5 48.5 70 51V94.25H26.25Z"/><path d="M119.5 90.5H80.5Q77.5 90.5 77.5 87V51Q76 48.5 74.5 51V94.25H119.5Z"/></g></svg>
<svg class="r" style="left:839px;top:952px;background:#fff" width="145" height="144" viewBox="0 0 145 144"><g fill="#f6f6cc" stroke="#55554a" stroke-width="1.3" stroke-linejoin="round"><path d="M25.6 51Q28.4 48.5 31.3 51V85Q31.3 88.2 34.5 88.2H70V93.9H25.6Z"/><path d="M119.5 51Q116.6 48.5 113.8 51V85Q113.8 88.2 110.6 88.2H74.5V93.9H119.5Z"/></g></svg>
<svg class="r" style="left:998px;top:952px;background:#fff" width="145" height="144" viewBox="0 0 145 144"><g fill="#f6f6cc" stroke="#55554a" stroke-width="1.3" stroke-linejoin="round"><path d="M48.9 25.6H96.1V29.6H75V114.3H96.1V118.3H48.9V114.3H70V29.6H48.9Z"/></g></svg>
<svg class="r" style="left:203px;top:1110.5px;background:#fff" width="145" height="144" viewBox="0 0 145 144"><g fill="#f6f6cc" stroke="#55554a" stroke-width="1.3" stroke-linejoin="round"><path d="M42.7 25.6H101.3V29.6H74.5V114.9H91V118.9H52.9V114.9H69.4V29.6H42.7Z"/></g></svg>
<svg class="r" style="left:362px;top:1110.5px;background:#fff" width="145" height="144" viewBox="0 0 145 144"><g fill="#f6f6cc" stroke="#55554a" stroke-width="1.3" stroke-linejoin="round"><path d="M41.2 25.6H103.2V30.7H74.8V118.9H69.7V30.7H41.2Z"/></g></svg>
<svg class="r" style="left:521px;top:1110.5px;background:#fff" width="145" height="144" viewBox="0 0 145 144"><g fill="#f6f6cc" stroke="#55554a" stroke-width="1.3" stroke-linejoin="round"><rect x="25.6" y="41.0" width="93.3" height="5.0" rx="0"/><rect x="46.6" y="46.0" width="4.6" height="51.8" rx="0"/><rect x="94.4" y="46.0" width="4.6" height="51.8" rx="0"/><rect x="41.0" y="97.8" width="62.5" height="5.2" rx="0"/></g></svg>
<svg class="r" style="left:680px;top:1110.5px;background:#fff" width="145" height="144" viewBox="0 0 145 144"><g fill="#f6f6cc" stroke="#55554a" stroke-width="1.3" stroke-linejoin="round"><rect x="25.9" y="41.0" width="93.3" height="5.0" rx="0"/><rect x="37.8" y="46.0" width="4.6" height="57.0" rx="0"/><rect x="101.5" y="46.0" width="4.6" height="57.0" rx="0"/><rect x="42.4" y="97.8" width="59.1" height="5.2" rx="0"/></g></svg>
<svg class="r" style="left:839px;top:1110.5px;background:#fff" width="145" height="144" viewBox="0 0 145 144"><g fill="#f6f6cc" stroke="#55554a" stroke-width="1.3" stroke-linejoin="round"><path d="M25.6 30.7H72V36.4H57Q54 36.4 54 39.5V104Q54 107.5 57 107.5H72V114.3H25.6V107.5H45.4Q48.4 107.5 48.4 104V39.5Q48.4 36.4 45.4 36.4H25.6Z"/><path d="M119.5 30.7H73V36.4H88Q91 36.4 91 39.5V104Q91 107.5 88 107.5H73V114.3H119.5V107.5H99.7Q96.7 107.5 96.7 104V39.5Q96.7 36.4 99.7 36.4H119.5Z"/></g></svg>
<svg class="r" style="left:998px;top:1110.5px;background:#fff" width="145" height="144" viewBox="0 0 145 144"><g fill="#f6f6cc" stroke="#55554a" stroke-width="1.3" stroke-linejoin="round"><path fill-rule="evenodd" d="M26.2 25.6H119.5V118.9H26.2Z M41 33H104.5Q113.8 33 113.8 42V102Q113.8 111.5 104.5 111.5H41Q31.9 111.5 31.9 102V42Q31.9 33 41 33Z"/><path d="M72 25.6V33M73.5 25.6V33M72 111.5V118.9M73.5 111.5V118.9" fill="none"/></g></svg>
<svg class="r" style="left:203px;top:1269.5px;background:#fff" width="145" height="144" viewBox="0 0 145 144"><g fill="#f6f6cc" stroke="#55554a" stroke-width="1.3" stroke-linejoin="round"><path fill-rule="evenodd" d="M29 25.6H115.5V118.9H29Z M36 32.4H98Q108.3 32.4 108.3 42V112H45Q36 112 36 102Z"/><path d="M29 32.4H36M108.3 112H115.5" fill="none"/></g></svg>
<svg class="r" style="left:362px;top:1269.5px;background:#fff" width="145" height="144" viewBox="0 0 145 144"><g fill="#f6f6cc" stroke="#55554a" stroke-width="1.3" stroke-linejoin="round"><path fill-rule="evenodd" d="M25.9 25.6H119.2V118.9H25.9Z M36 31.3H109Q113.5 31.3 113.5 36V108.5Q113.5 113.2 109 113.2H36Q31.6 113.2 31.6 108.5V36Q31.6 31.3 36 31.3Z"/><path d="M72 25.6V31.3M72 113.2V118.9M25.9 72H31.6M113.5 72H119.2" fill="none"/></g></svg>
<svg class="r" style="left:521px;top:1269.5px;background:#fff" width="145" height="144" viewBox="0 0 145 144"><g fill="#f6f6cc" stroke="#55554a" stroke-width="1.3" stroke-linejoin="round"><path d="M22.8 79.6H104.7M38 79.6L49.5 48.4H78L89.3 79.6" fill="none" stroke="#222" stroke-width="1.8"/></g></svg>
<svg class="r" style="left:680px;top:1269.5px;background:#fff" width="145" height="144" viewBox="0 0 145 144"><g fill="#f6f6cc" stroke="#55554a" stroke-width="1.3" stroke-linejoin="round"><rect x="23.0" y="23.3" width="80.8" height="4.0" rx="0"/><path d="M29.9 27.3L61 105.2H64.8L97 27.3H93L62.9 99L34 27.3Z"/></g></svg>
<svg class="r" style="left:839px;top:1269.5px;background:#fff" width="145" height="144" viewBox="0 0 145 144"><g fill="#f6f6cc" stroke="#55554a" stroke-width="1.3" stroke-linejoin="round"><g stroke="none" fill="#8a8a78"><rect x="34.7" y="46.0" width="77.9" height="3.5" rx="0"/><rect x="49.5" y="49.5" width="3.5" height="50.0" rx="0"/><rect x="95.6" y="49.5" width="3.4" height="50.0" rx="0"/><rect x="42.7" y="98.4" width="17.0" height="4.0" rx="0"/><rect x="88.2" y="98.4" width="17.0" height="4.0" rx="0"/><rect x="62.0" y="49.5" width="1.6" height="7.5" rx="0"/><rect x="72.8" y="49.5" width="1.6" height="7.5" rx="0"/><rect x="84.0" y="49.5" width="1.6" height="7.5" rx="0"/></g></g></svg>
<div class="r" style="left:1243.5px;top:1110px;width:1425.5px;height:825px;background:#fff;box-sizing:border-box;border:1.5px solid #ec7c40;box-shadow:0 0 4px rgba(0,0,0,0.18)"></div>
<span class="t" style="left:1252.5px;top:1127.0px;font-size:17px;color:#444;">BoxWeb</span>
<div class="r" style="left:2490.0px;top:1134.7px;width:15.0px;height:2.6px;background:#333;"></div>
<div class="r" style="left:2558px;top:1127px;width:14.5px;height:13.5px;box-sizing:border-box;border:1.5px solid #333;border-top:4px solid #333"></div>
<svg class="r" style="left:2627px;top:1127px" width="14" height="13"><path d="M1 0.5L13 12.5M13 0.5L1 12.5" stroke="#333" stroke-width="2.4"/></svg>
<svg class="r" style="left:1259.5px;top:1175.5px" width="15" height="10.5"><path d="M0 0H15L7.5 10.5z" fill="#f46f20"/></svg>
<span class="t" style="left:1300.5px;top:1172.0px;font-size:21.5px;color:#f46f20;font-weight:bold;transform:scaleX(0.9724);">BoxWeb</span>
<svg class="r" style="left:1259.5px;top:1326.5px" width="15" height="10.5"><path d="M0 0H15L7.5 10.5z" fill="#f46f20"/></svg>
<span class="t" style="left:1300.5px;top:1323.0px;font-size:21.5px;color:#f46f20;font-weight:bold;transform:scaleX(0.9556);">Bovenflens</span>
<svg class="r" style="left:1259.5px;top:1444.0px" width="15" height="10.5"><path d="M0 0H15L7.5 10.5z" fill="#f46f20"/></svg>
<span class="t" style="left:1300.5px;top:1441.0px;font-size:21.5px;color:#f46f20;font-weight:bold;transform:scaleX(0.9824);">Onderflens</span>
<svg class="r" style="left:1259.5px;top:1595.5px" width="15" height="10.5"><path d="M0 0H15L7.5 10.5z" fill="#f46f20"/></svg>
<span class="t" style="left:1300.5px;top:1592.0px;font-size:21.5px;color:#f46f20;font-weight:bold;transform:scaleX(0.9615);">Lijf</span>
<svg class="r" style="left:1259.5px;top:1675.5px" width="15" height="10.5"><path d="M0 0H15L7.5 10.5z" fill="#f46f20"/></svg>
<span class="t" style="left:1300.5px;top:1672.0px;font-size:21.5px;color:#f46f20;font-weight:bold;transform:scaleX(1.0299);">Materiaal</span>
<div class="r" style="left:1471.0px;top:1205.5px;width:225.0px;height:32.0px;background:#f1f1f1;"></div>
<span class="t" style="left:1300.0px;top:1214.0px;font-size:17.5px;color:#111;font-weight:bold;transform:scaleX(0.9861);">Naam</span>
<span class="t" style="left:1478.0px;top:1214.0px;font-size:17.5px;color:#111;font-weight:bold;transform:scaleX(1.0053);">BoxWeb200x(300/220)</span>
<div class="r" style="left:1471.0px;top:1241.5px;width:225.0px;height:32.0px;background:#f1f1f1;"></div>
<span class="t" style="left:1300.0px;top:1250.0px;font-size:17.5px;color:#111;font-weight:bold;transform:scaleX(0.9685);">Rotation [°]</span>
<span class="t" style="left:1478.0px;top:1250.0px;font-size:17.5px;color:#111;font-weight:bold;transform:scaleX(0.9557);">0,0</span>
<div class="r" style="left:1471.0px;top:1277.5px;width:225.0px;height:32.0px;background:#f1f1f1;"></div>
<span class="t" style="left:1300.0px;top:1286.0px;font-size:17.5px;color:#111;font-weight:bold;">Hoogte [mm]</span>
<span class="t" style="left:1478.0px;top:1286.0px;font-size:17.5px;color:#111;font-weight:bold;transform:scaleX(0.9932);">200</span>
<div class="r" style="left:1471.0px;top:1393.0px;width:225.0px;height:32.0px;background:#f1f1f1;"></div>
<span class="t" style="left:1300.0px;top:1402.0px;font-size:17.5px;color:#111;font-weight:bold;transform:scaleX(0.9751);">Breedte [mm]</span>
<span class="t" style="left:1478.0px;top:1402.0px;font-size:17.5px;color:#111;font-weight:bold;transform:scaleX(0.9932);">300</span>
<div class="r" style="left:1471.0px;top:1509.5px;width:225.0px;height:32.0px;background:#f1f1f1;"></div>
<span class="t" style="left:1300.0px;top:1518.0px;font-size:17.5px;color:#111;font-weight:bold;transform:scaleX(0.9751);">Breedte [mm]</span>
<span class="t" style="left:1478.0px;top:1518.0px;font-size:17.5px;color:#111;font-weight:bold;transform:scaleX(0.9932);">200</span>
<div class="r" style="left:1471.0px;top:1545.0px;width:225.0px;height:32.0px;background:#f1f1f1;"></div>
<span class="t" style="left:1300.0px;top:1554.0px;font-size:17.5px;color:#111;font-weight:bold;transform:scaleX(0.9753);">Binnenafstand [mm]</span>
<span class="t" style="left:1478.0px;top:1554.0px;font-size:17.5px;color:#111;font-weight:bold;transform:scaleX(0.9932);">170</span>
<div class="r" style="left:1474.5px;top:1357.0px;width:146.0px;height:31.0px;background:#f1f1f1;"></div>
<span class="t" style="left:1300.0px;top:1366.0px;font-size:17.5px;color:#111;font-weight:bold;transform:scaleX(0.9897);">Dikte [mm]</span>
<span class="t" style="left:1480.8px;top:1366.0px;font-size:17.5px;color:#111;font-weight:bold;transform:scaleX(0.9101);">15,0</span>
<div class="r" style="left:1625.0px;top:1357.0px;width:33.0px;height:15.0px;background:#9b9b9b;"></div>
<div class="r" style="left:1625.0px;top:1373.0px;width:33.0px;height:15.0px;background:#9b9b9b;"></div>
<svg class="r" style="left:1637px;top:1361.5px" width="9" height="22"><path d="M0 5.5L4.5 0L9 5.5Z M0 16.5L4.5 22L9 16.5Z" fill="#fff"/></svg>
<div class="r" style="left:1663.0px;top:1357.0px;width:33.0px;height:31.0px;background:#9b9b9b;"></div>
<span class="t" style="left:1673.0px;top:1363.0px;font-size:15px;color:#fff;font-weight:bold;">...</span>
<div class="r" style="left:1474.5px;top:1473.5px;width:146.0px;height:31.0px;background:#f1f1f1;"></div>
<span class="t" style="left:1300.0px;top:1482.0px;font-size:17.5px;color:#111;font-weight:bold;transform:scaleX(0.9897);">Dikte [mm]</span>
<span class="t" style="left:1480.8px;top:1482.0px;font-size:17.5px;color:#111;font-weight:bold;transform:scaleX(0.9101);">15,0</span>
<div class="r" style="left:1625.0px;top:1473.5px;width:33.0px;height:15.0px;background:#9b9b9b;"></div>
<div class="r" style="left:1625.0px;top:1489.5px;width:33.0px;height:15.0px;background:#9b9b9b;"></div>
<svg class="r" style="left:1637px;top:1478px" width="9" height="22"><path d="M0 5.5L4.5 0L9 5.5Z M0 16.5L4.5 22L9 16.5Z" fill="#fff"/></svg>
<div class="r" style="left:1663.0px;top:1473.5px;width:33.0px;height:31.0px;background:#9b9b9b;"></div>
<span class="t" style="left:1673.0px;top:1480.0px;font-size:15px;color:#fff;font-weight:bold;">...</span>
<div class="r" style="left:1474.5px;top:1625.0px;width:146.0px;height:31.0px;background:#f1f1f1;"></div>
<span class="t" style="left:1300.0px;top:1634.0px;font-size:17.5px;color:#111;font-weight:bold;transform:scaleX(0.9897);">Dikte [mm]</span>
<span class="t" style="left:1480.8px;top:1634.0px;font-size:17.5px;color:#111;font-weight:bold;transform:scaleX(0.9101);">10,0</span>
<div class="r" style="left:1625.0px;top:1625.0px;width:33.0px;height:15.0px;background:#9b9b9b;"></div>
<div class="r" style="left:1625.0px;top:1641.0px;width:33.0px;height:15.0px;background:#9b9b9b;"></div>
<svg class="r" style="left:1637px;top:1629.5px" width="9" height="22"><path d="M0 5.5L4.5 0L9 5.5Z M0 16.5L4.5 22L9 16.5Z" fill="#fff"/></svg>
<div class="r" style="left:1663.0px;top:1625.0px;width:33.0px;height:31.0px;background:#9b9b9b;"></div>
<span class="t" style="left:1673.0px;top:1631.0px;font-size:15px;color:#fff;font-weight:bold;">...</span>
<span class="t" style="left:1300.0px;top:1713.0px;font-size:17.5px;color:#111;font-weight:bold;transform:scaleX(0.9180);">Staal</span>
<div class="r" style="left:1473.0px;top:1704.0px;width:147.5px;height:33.0px;background:#e4e4e4;"></div>
<span class="t" style="left:1481.0px;top:1713.0px;font-size:17.5px;color:#111;transform:scaleX(0.9293);">S 235</span>
<svg class="r" style="left:1601px;top:1716.5px" width="12" height="8"><path d="M0 0H12L6 8z" fill="#000"/></svg>
<div class="r" style="left:1625.0px;top:1704.0px;width:33.0px;height:33.0px;background:#9b9b9b;"></div>
<svg class="r" style="left:1625px;top:1704px" width="33" height="33"><path d="M9 26l1.8-6.2L21.5 6.7a1.6 1.6 0 0 1 2.3-.2l2 1.7a1.6 1.6 0 0 1 .2 2.3L15.2 23.5z" fill="#fff"/><path d="M10 21.5l3.6 3" stroke="#9b9b9b" stroke-width="1.4"/></svg>
<div class="r" style="left:1663.0px;top:1704.0px;width:33.0px;height:33.0px;background:#a4a4a4;"></div>
<div class="r" style="left:1668.0px;top:1717.0px;width:23.0px;height:7.0px;background:#f4f4f4;"></div>
<div class="r" style="left:1676.0px;top:1709.0px;width:7.0px;height:23.0px;background:#f4f4f4;"></div>
<div class="r" style="left:2419.25px;top:1886.5px;width:111.5px;height:33px;background:#9b9b9b;box-sizing:border-box;border:1px solid #8a8a8a"></div>
<div class="r" style="left:2542px;top:1886.5px;width:111.75px;height:33px;background:#9b9b9b;box-sizing:border-box;border:1px solid #8a8a8a"></div>
<span class="t" style="left:2458.8px;top:1896.0px;font-size:17.5px;color:#fff;transform:scaleX(0.9893);">Oké</span>
<span class="t" style="left:2557.0px;top:1896.0px;font-size:17.5px;color:#fff;transform:scaleX(1.0183);">Annuleren</span>
<svg class="r" style="left:2000px;top:1280px" width="660" height="620" viewBox="2000 1280 660 620">
<g fill="#fafad4" stroke="#111" stroke-width="1.3">
<rect x="2171.75" y="1350" width="407" height="20.5"/>
<rect x="2226.25" y="1370.5" width="13.75" height="250.75"/>
<rect x="2510.5" y="1370.5" width="14" height="250.75"/>
<rect x="2240" y="1600.5" width="270.5" height="20.75"/>
</g>
<g stroke="#000" stroke-width="1.4" fill="none">
<path d="M2375.25 1330V1641.75" stroke-dasharray="20 5 3 5"/>
<path d="M2151.75 1472.25H2597" stroke-dasharray="20 5 3 5"/>
</g>
<path d="M2375.25 1310L2380 1331H2370.5Z" fill="#000"/>
<path d="M2618.75 1472.25L2596.25 1467.7V1476.8Z" fill="#000"/>
<path d="M2375.25 1412V1472.25M2316 1472.25H2375.25" stroke="#0000f0" stroke-width="1.6" stroke-dasharray="20 5 3 5" fill="none"/>
<path d="M2375.25 1391.25L2380 1412.5H2370.5Z" fill="#0000f0"/>
<path d="M2294.25 1472.25L2316.25 1467.7V1476.8Z" fill="#0000f0"/>
<g stroke="#000" stroke-width="1.2" fill="none">
<path d="M2062 1350V1621.25M2107 1350V1621.25"/>
<path d="M2050.5 1350H2140M2100 1370.5H2140M2100 1600.5H2140M2050.5 1621.25H2140"/>
<path d="M2172.25 1653.25V1743M2578.75 1653.25V1743M2226.25 1653.25V1697.5M2240 1653.25V1697.5M2510.5 1653.25V1697.5M2524.25 1653.25V1697.5"/>
<path d="M2172.25 1686.25H2578.75M2172.25 1731.25H2578.75"/>
</g>
<g stroke="#000" stroke-width="2.3" stroke-linecap="round">
<path d="M2055 1343L2069 1357"/>
<path d="M2100 1343L2114 1357"/>
<path d="M2100 1363.5L2114 1377.5"/>
<path d="M2100 1593.5L2114 1607.5"/>
<path d="M2100 1614.25L2114 1628.25"/>
<path d="M2055 1614.25L2069 1628.25"/>
<path d="M2165.25 1693.25L2179.25 1679.25"/>
<path d="M2219.25 1693.25L2233.25 1679.25"/>
<path d="M2233 1693.25L2247 1679.25"/>
<path d="M2503.5 1693.25L2517.5 1679.25"/>
<path d="M2517.25 1693.25L2531.25 1679.25"/>
<path d="M2571.75 1693.25L2585.75 1679.25"/>
<path d="M2165.25 1738.25L2179.25 1724.25"/>
<path d="M2571.75 1738.25L2585.75 1724.25"/>
</g>
<g font-family="Liberation Sans, sans-serif" font-size="22.5" fill="#000" text-anchor="middle">
<text x="2198.75" y="1680.75">40</text>
<text x="2233.75" y="1680.75">10</text>
<text x="2375" y="1680.75">200</text>
<text x="2518.5" y="1680.75">10</text>
<text x="2551.5" y="1680.75">40</text>
<text x="2375" y="1725.75">300</text>
<text transform="translate(2057 1485) rotate(-90)">200</text>
<text transform="translate(2102.5 1485) rotate(-90)">170</text>
<text transform="translate(2101.5 1360.5) rotate(-90)">15</text>
<text transform="translate(2101.5 1610.5) rotate(-90)">15</text>
<text x="2375.5" y="1304">z</text>
<text x="2626.5" y="1469.5">y</text>
<text x="2294.5" y="1465.5">v</text>
<text x="2383" y="1390.5">u</text>
</g>
<g fill="none" stroke-width="1.4"><path d="M2020.5 1859.5V1815" stroke="#0000e0"/><path d="M2016.5 1833L2020.5 1814L2024.5 1833" stroke="#0000e0"/><path d="M2020.5 1859.5H2064" stroke="#008a00"/><path d="M2046 1855L2065.5 1859.7L2046 1864" stroke="#008a00"/></g>
<g font-family="Liberation Sans, sans-serif" font-size="17"><text x="2030" y="1817" fill="#0000e0">Z</text><text x="2066" y="1852.5" fill="#008a00">Y</text></g>
</svg>
<svg class="r" style="left:0;top:0;pointer-events:none" width="3838" height="2018" viewBox="0 0 3838 2018">
<defs><filter id="ds" x="-20%" y="-20%" width="140%" height="140%"><feDropShadow dx="2.5" dy="3" stdDeviation="2.5" flood-color="#000" flood-opacity="0.42"/></filter>
<radialGradient id="cg" cx="0.5" cy="0.4" r="0.6"><stop offset="0" stop-color="#f6494f"/><stop offset="1" stop-color="#ec3e45"/></radialGradient></defs>
<g filter="url(#ds)">
<ellipse cx="1571" cy="1480" rx="143" ry="349.5" fill="none" stroke="#e8484e" stroke-width="2.8"/>
<path d="M1943.0 587.4L1773.1 926.8" stroke="#f0444a" stroke-width="8.5" stroke-linecap="round" fill="none"/>
<path d="M1761.0 950.9L1761.9 916.7L1787.8 929.7Z" fill="#f0444a"/>
<path d="M2507.7 613.0L2672.0 555.0" stroke="#f0444a" stroke-width="8.5" stroke-linecap="round" fill="none"/>
<path d="M2697.5 546.0L2673.1 570.0L2663.4 542.6Z" fill="#f0444a"/>
<path d="M3098.8 1018.8L3786.4 403.0" stroke="#f0444a" stroke-width="8.5" stroke-linecap="round" fill="none"/>
<path d="M3806.5 385.0L3793.1 416.5L3773.7 394.9Z" fill="#f0444a"/>
<path d="M406.7 532.3L460.9 884.6" stroke="#f0444a" stroke-width="8.5" stroke-linecap="round" fill="none"/>
<path d="M465.0 911.2L446.0 882.8L474.6 878.4Z" fill="#f0444a"/>
<path d="M565.0 654.6L720.0 1109.9" stroke="#f0444a" stroke-width="8.5" stroke-linecap="round" fill="none"/>
<path d="M728.8 1135.5L705.0 1110.8L732.5 1101.5Z" fill="#f0444a"/>
<circle cx="1984.4" cy="587.4" r="20.5" fill="url(#cg)"/>
<circle cx="2471.8" cy="630.9" r="20.5" fill="url(#cg)"/>
<circle cx="3082.5" cy="1040" r="20.5" fill="url(#cg)"/>
<circle cx="417.4" cy="506.2" r="20.5" fill="url(#cg)"/>
<circle cx="548.5" cy="621.4" r="20.5" fill="url(#cg)"/>
<circle cx="1737.5" cy="1422.6" r="20.5" fill="url(#cg)"/>
<circle cx="2472.5" cy="1855" r="20.5" fill="url(#cg)"/>
</g>
<g font-family="Liberation Sans, sans-serif" font-size="28" fill="#fff" text-anchor="middle">
<text x="1984.4" y="597.4">1</text>
<text x="2471.8" y="640.9">2</text>
<text x="3082.5" y="1050">3</text>
<text x="417.4" y="516.2">4</text>
<text x="548.5" y="631.4">5</text>
<text x="1737.5" y="1432.6">6</text>
<text x="2472.5" y="1865">7</text>
</g></svg>
</body></html>
